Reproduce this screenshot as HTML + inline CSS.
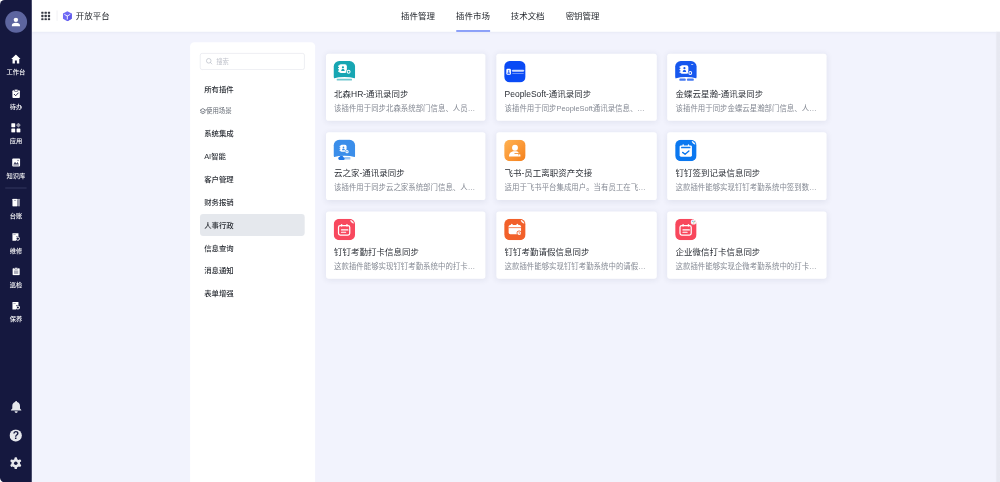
<!DOCTYPE html>
<html lang="zh-CN">
<head>
<meta charset="utf-8">
<title>开放平台 - 插件市场</title>
<style>
*{box-sizing:border-box;margin:0;padding:0}
html,body{width:1000px;height:482px;overflow:hidden;background:#f2f3fd}
body{font-family:"Liberation Sans","Noto Sans CJK SC",sans-serif;color:#1f2329}
#stage{position:absolute;left:0;top:0;width:1920px;height:926px;transform:scale(0.5208333);transform-origin:0 0;background:#f2f3fd;overflow:hidden;filter:blur(0.5px)}
.abs{position:absolute}
/* sidebar */
#sidebg{position:absolute;left:0;top:0;width:30px;height:926px;background:#fff}
#side{position:absolute;left:0;top:0;width:60.5px;height:925.5px;background:#15183f;border-radius:9px 0 0 9px}
#avatar{position:absolute;left:9.5px;top:20.8px;width:42px;height:42px;border-radius:50%;background:#5d659f}
.sico{position:absolute}
.sico svg{display:block;width:100%;height:100%}
.sico .q{position:absolute;left:0;top:0;width:100%;height:100%;text-align:center;font-size:20px;line-height:25.5px;font-weight:700;color:#15183f}
.slab{position:absolute;left:0;width:61px;text-align:center;color:#fff;font-size:12px;font-weight:500;line-height:16px;height:16px;white-space:nowrap}
#sdiv{position:absolute;left:10px;width:41px;top:360px;height:1.5px;background:#33365e}
/* header */
#head{position:absolute;left:60.5px;top:0;width:1860px;height:61px;background:#fff;box-shadow:0 2px 5px rgba(60,70,120,.05)}
#title{position:absolute;left:85px;top:18.5px;font-size:16.3px;line-height:24px;color:#1f2329}
.tab{position:absolute;top:18.5px;font-size:16.3px;line-height:24px;color:#1f2329;width:64px;white-space:nowrap}
#tabline{position:absolute;left:816px;top:57.6px;width:65px;height:3.4px;background:#6f88f7}
/* category panel */
#panel{position:absolute;left:365px;top:80.5px;width:240px;height:860px;background:#fff;border-radius:8px}
#search{position:absolute;left:19px;top:21.5px;width:201px;height:32px;border:1px solid #dfe1e8;border-radius:4px}
#search span{position:absolute;left:30px;top:8px;font-size:12.2px;line-height:16px;color:#c0c3cc}
.cat{position:absolute;left:19px;width:201px;height:42px;border-radius:6px;padding-left:8px;font-size:14.2px;line-height:42.6px;color:#2b2f36;font-weight:500}
.cat.on{background:#e5e8ed}
#scene{position:absolute;left:30.6px;top:122.4px;font-size:12.3px;line-height:20px;color:#646a73}
/* cards */
.card{position:absolute;width:306px;height:129px;background:#fff;border-radius:5px;box-shadow:0 2px 12px rgba(40,45,80,.085)}
.card .ic{position:absolute;display:block;overflow:hidden}
.card .t{position:absolute;left:15.2px;top:64.7px;width:280px;font-size:16.3px;line-height:24px;color:#2b2f36;white-space:nowrap;overflow:hidden}
.card .d{position:absolute;left:15.6px;top:94px;width:274px;font-size:14.25px;line-height:22px;color:#858a94;white-space:nowrap;overflow:hidden;text-overflow:ellipsis}
</style>
</head>
<body>
<div id="stage">

<div id="head">
  <svg class="abs" style="left:18.8px;top:21.5px" width="17.4" height="17.4" viewBox="0 0 20 20" fill="#353842"><rect x="0" y="0" width="5.2" height="5.2" rx="1.3"/><rect x="7.4" y="0" width="5.2" height="5.2" rx="1.3"/><rect x="14.8" y="0" width="5.2" height="5.2" rx="1.3"/><rect x="0" y="7.4" width="5.2" height="5.2" rx="1.3"/><rect x="7.4" y="7.4" width="5.2" height="5.2" rx="1.3"/><rect x="14.8" y="7.4" width="5.2" height="5.2" rx="1.3"/><rect x="0" y="14.8" width="5.2" height="5.2" rx="1.3"/><rect x="7.4" y="14.8" width="5.2" height="5.2" rx="1.3"/><rect x="14.8" y="14.8" width="5.2" height="5.2" rx="1.3"/></svg>
  <div class="abs" style="left:48px;top:20px;width:1px;height:20px;background:#e3e5ea"></div>
  <svg class="abs" style="left:59.5px;top:20.5px" width="18.6" height="20.3" viewBox="0 0 22 24">
    <path d="M11 0.5 L21 6 V18 L11 23.5 L1 18 V6 Z" fill="#6e69f5"/>
    <path d="M11 12 L21 6 V18 L11 23.5 Z" fill="#605aea"/>
    <path d="M5 8.2 L11 11.6 L17 8.2 M11 11.6 V18.5" stroke="#fff" stroke-width="2" fill="none" stroke-linecap="round"/>
  </svg>
  <div id="title">开放平台</div>
  <div class="tab" style="left:709.5px">插件管理</div>
  <div class="tab" style="left:815px">插件市场</div>
  <div class="tab" style="left:920px">技术文档</div>
  <div class="tab" style="left:1025.5px">密钥管理</div>
  <div id="tabline" style="left:815px"></div>
</div>

<div id="sidebg"></div>
<div id="side">
  <div id="avatar">
    <svg class="abs" style="left:12.5px;top:12px" width="17" height="18.7" viewBox="0 0 20 22" fill="#fff"><circle cx="10" cy="6" r="5"/><path d="M0.5 20 C0.5 15 4 12.5 10 12.5 S19.5 15 19.5 20 V21 H0.5 Z"/></svg>
  </div>
<!--SB-->
<div class="sico" style="left:21.0px;top:104.0px;width:19px;height:19px"><svg viewBox="0 0 20 20" fill="#fff"><path d="M10 0.8 L0.6 9.6 H3.2 V18.8 H8 V12.6 H12 V18.8 H16.8 V9.6 H19.4 Z"/></svg></div><div class="slab" style="top:131.2px">工作台</div>
<div class="sico" style="left:21.5px;top:170.5px;width:18px;height:18px"><svg viewBox="0 0 20 20"><rect x="2" y="2.6" width="16" height="16.6" rx="2.2" fill="#fff"/><rect x="6.4" y="0.6" width="7.2" height="4.4" rx="1.2" fill="#fff" stroke="#15183f" stroke-width="1.2"/><path d="M6 11.2 L9 14.2 L14.4 8.4" stroke="#15183f" stroke-width="2" fill="none" stroke-linecap="round" stroke-linejoin="round"/></svg></div><div class="slab" style="top:197.2px">待办</div>
<div class="sico" style="left:21.0px;top:236.0px;width:19px;height:19px"><svg viewBox="0 0 20 20" fill="#fff"><rect x="0.8" y="0.8" width="7.8" height="7.8" rx="1"/><rect x="0.8" y="11.4" width="7.8" height="7.8" rx="1"/><rect x="11.4" y="11.4" width="7.8" height="7.8" rx="1"/><rect x="11.6" y="1" width="7" height="7" rx="1" transform="rotate(45 15.1 4.5)" opacity=".55"/></svg></div><div class="slab" style="top:263.2px">应用</div>
<div class="sico" style="left:21.5px;top:302.5px;width:18px;height:18px"><svg viewBox="0 0 20 20"><rect x="1.6" y="1.6" width="16.8" height="16.8" rx="2" fill="#fff"/><path d="M4 14.5 L7.5 8.5 L10.5 12 L13 9 L16 14.5 Z" fill="#15183f" opacity=".8"/><rect x="4" y="15.2" width="12" height="1.4" fill="#15183f" opacity=".5"/><circle cx="14" cy="5.6" r="1.5" fill="#15183f" opacity=".6"/></svg></div><div class="slab" style="top:329.2px">知识库</div>
<div id="sdiv"></div>
<div class="sico" style="left:22.5px;top:381.0px;width:16px;height:16px"><svg viewBox="0 0 18 18"><rect x="1" y="0.8" width="11" height="16.4" rx="1.2" fill="#fff"/><rect x="13.2" y="0.8" width="3.8" height="16.4" rx="1" fill="#fff" opacity=".6"/><rect x="4.4" y="3.4" width="4.4" height="1.4" fill="#15183f" opacity=".5"/></svg></div><div class="slab" style="top:406.5px">台账</div>
<div class="sico" style="left:22.5px;top:447.0px;width:16px;height:16px"><svg viewBox="0 0 18 18"><path d="M1 1 H14 V8 H9 V17 H1 Z" fill="#fff"/><rect x="3" y="3.4" width="5" height="1.4" fill="#15183f" opacity=".5"/><circle cx="12.6" cy="12.6" r="3.6" fill="none" stroke="#fff" stroke-width="2"/><path d="M9.4 9.4 L11 11" stroke="#fff" stroke-width="2"/></svg></div><div class="slab" style="top:472.5px">维修</div>
<div class="sico" style="left:22.5px;top:513.0px;width:16px;height:16px"><svg viewBox="0 0 18 18"><rect x="1.4" y="2.4" width="15.2" height="15" rx="1.4" fill="#fff"/><rect x="5.6" y="0.6" width="6.8" height="3.6" rx="1" fill="#fff" stroke="#15183f" stroke-width="1"/><rect x="4.4" y="7" width="9.2" height="7.6" fill="#15183f" opacity=".35"/></svg></div><div class="slab" style="top:538.5px">巡检</div>
<div class="sico" style="left:22.5px;top:579.0px;width:16px;height:16px"><svg viewBox="0 0 18 18"><path d="M1 1 H14 V8 H9 V17 H1 Z" fill="#fff"/><rect x="3" y="3.4" width="5" height="1.4" fill="#15183f" opacity=".5"/><circle cx="12.8" cy="12.8" r="3.4" fill="none" stroke="#fff" stroke-width="2.2"/></svg></div><div class="slab" style="top:604.5px">保养</div>
<div class="sico" style="left:19.5px;top:768.5px;width:22px;height:24px"><svg viewBox="0 0 22 24" fill="#e6e7ec"><path d="M11 1 C12 1 12.8 1.8 12.8 2.8 C16.4 3.8 18.4 6.8 18.4 10.4 V15.4 L21 18.4 V19.4 H1 V18.4 L3.6 15.4 V10.4 C3.6 6.8 5.6 3.8 9.2 2.8 C9.2 1.8 10 1 11 1 Z"/><path d="M8 20.8 H14 A3 3 0 0 1 8 20.8 Z"/></svg></div>
<div class="sico" style="left:18.3px;top:823.5px;width:24.4px;height:24.4px"><svg viewBox="0 0 24 24"><circle cx="12" cy="12" r="11.6" fill="#e6e7ec"/></svg><span class="q">?</span></div>
<div class="sico" style="left:18.2px;top:877.4px;width:24.6px;height:24.6px"><svg viewBox="0 0 24 24"><g fill="#e6e7ec"><circle cx="12" cy="12" r="8"/><rect x="9.6" y="1" width="4.8" height="6" rx="1.6" transform="rotate(0 12 12)"/><rect x="9.6" y="1" width="4.8" height="6" rx="1.6" transform="rotate(60 12 12)"/><rect x="9.6" y="1" width="4.8" height="6" rx="1.6" transform="rotate(120 12 12)"/><rect x="9.6" y="1" width="4.8" height="6" rx="1.6" transform="rotate(180 12 12)"/><rect x="9.6" y="1" width="4.8" height="6" rx="1.6" transform="rotate(240 12 12)"/><rect x="9.6" y="1" width="4.8" height="6" rx="1.6" transform="rotate(300 12 12)"/></g><circle cx="12" cy="12" r="3.3" fill="#15183f"/></svg></div>
<!--/SB-->
</div>

<div id="panel">
  <div id="search"><svg class="abs" style="left:10px;top:7.5px" width="13.5" height="13.5" viewBox="0 0 14 14" fill="none" stroke="#b4b8c3" stroke-width="1.3"><circle cx="6" cy="6" r="4.6"/><path d="M9.4 9.4 L12.6 12.6" stroke-linecap="round"/></svg><span>搜索</span></div>
  <div class="cat" style="top:69px">所有插件</div>
  <svg class="abs" style="left:18.2px;top:126px" width="13" height="13" viewBox="0 0 10 10" fill="none" stroke="#5f656f" stroke-width="1.15"><path d="M5 1 L9 3.6 L5 6.2 L1 3.6 Z"/><path d="M1 6.2 L5 8.8 L9 6.2"/></svg>
  <div id="scene">使用场景</div>
  <div class="cat" style="top:154px">系统集成</div>
  <div class="cat" style="top:198px">AI智能</div>
  <div class="cat" style="top:242px">客户管理</div>
  <div class="cat" style="top:286px">财务报销</div>
  <div class="cat on" style="top:330px">人事行政</div>
  <div class="cat" style="top:374px">信息查询</div>
  <div class="cat" style="top:418px">消息通知</div>
  <div class="cat" style="top:462px">表单增强</div>
</div>

<div class="abs" style="left:1911.5px;top:61px;width:9px;height:866px;background:linear-gradient(90deg,#edeef7,#e7e8f1 30%)"></div>
<div id="cards">
<div class="card" style="left:626px;top:103px;width:306px;height:129px"><svg class="ic" style="left:13px;top:13px" width="44" height="44" viewBox="0 0 44 44"><clipPath id="cp0"><rect width="40" height="40" rx="10.4"/></clipPath><g transform="translate(1.71 1.12) scale(1.027)" clip-path="url(#cp0)"><rect width="40" height="40" fill="#fff"/><path d="M-1 -1 H41 V32.8 Q20 27.2 -1 32.8 Z" fill="#17a6b3"/>
<rect x="5.6" y="33.2" width="28.6" height="3.4" rx="1.2" fill="#17a6b3" opacity=".62"/>
<g transform="translate(8.0 6.2) scale(1.0)">
<rect x="0" y="2.2" width="3.4" height="2.4" rx="1" fill="#fff"/><rect x="0" y="6.9" width="3.4" height="2.4" rx="1" fill="#fff"/><rect x="0" y="11.6" width="3.4" height="2.4" rx="1" fill="#fff"/>
<rect x="1.8" y="0" width="14.8" height="16.2" rx="3.6" fill="#fff"/>
<circle cx="9.3" cy="5.6" r="2" fill="#17a6b3"/><path d="M6 12.6 C6 10 7.4 8.8 9.3 8.8 S12.6 10 12.6 12.6 Z" fill="#17a6b3"/>
</g>
<circle cx="27.9" cy="20.1" r="4.6" fill="#17a6b3"/><circle cx="27.9" cy="20.1" r="3.5999999999999996" fill="#fff"/><circle cx="27.9" cy="20.1" r="1.6999999999999997" fill="#17a6b3"/>
</g></svg><div class="t" style="left:15.40px">北森HR-通讯录同步</div><div class="d" style="left:15.40px">该插件用于同步北森系统部门信息、人员信息至平台通讯录</div></div>
<div class="card" style="left:953px;top:103px;width:308px;height:129px"><svg class="ic" style="left:14px;top:13px" width="44" height="44" viewBox="0 0 44 44"><clipPath id="cp1"><rect width="40" height="40" rx="10.4"/></clipPath><g transform="translate(1.06 1.12) scale(1.027)" clip-path="url(#cp1)"><rect width="40" height="40" fill="#0a4af5"/>
<rect x="4" y="14.5" width="8.6" height="11.2" rx="2.2" fill="#fff"/><circle cx="8.3" cy="18.6" r="1.5" fill="#0a4af5"/><path d="M5.9 24 C5.9 21.8 7 21 8.3 21 S10.7 21.8 10.7 24 Z" fill="#0a4af5"/>
<rect x="14.8" y="16.5" width="22" height="3.6" rx=".8" fill="#fff" opacity=".8"/><rect x="14.8" y="22.6" width="22" height="1.8" rx=".8" fill="#fff" opacity=".4"/>
</g></svg><div class="t" style="left:15.75px">PeopleSoft-通讯录同步</div><div class="d" style="left:15.75px">该插件用于同步PeopleSoft通讯录信息、部门信息至平台</div></div>
<div class="card" style="left:1281px;top:103px;width:306px;height:129px"><svg class="ic" style="left:14px;top:13px" width="44" height="44" viewBox="0 0 44 44"><clipPath id="cp2"><rect width="40" height="40" rx="10.4"/></clipPath><g transform="translate(1.36 1.12) scale(1.027)" clip-path="url(#cp2)"><rect width="40" height="40" fill="#fff"/><path d="M-1 -1 H41 V32.8 Q20 27.2 -1 32.8 Z" fill="#1657ee"/>
<rect x="8" y="32.8" width="11.6" height="4.2" rx="1.2" fill="#1657ee" opacity=".8"/><rect x="22.2" y="32.8" width="12.4" height="4.2" rx="1.2" fill="#1657ee" opacity=".8"/><rect x="29.6" y="6" width="4.4" height="1.7" rx=".8" fill="#fff" opacity=".85"/>
<g transform="translate(8.0 7.8) scale(1.0)">
<rect x="0" y="2.2" width="3.4" height="2.4" rx="1" fill="#fff"/><rect x="0" y="6.9" width="3.4" height="2.4" rx="1" fill="#fff"/><rect x="0" y="11.6" width="3.4" height="2.4" rx="1" fill="#fff"/>
<rect x="1.8" y="0" width="14.8" height="16.2" rx="3.6" fill="#fff"/>
<circle cx="9.3" cy="5.6" r="2" fill="#1657ee"/><path d="M6 12.6 C6 10 7.4 8.8 9.3 8.8 S12.6 10 12.6 12.6 Z" fill="#1657ee"/>
</g>
<circle cx="28.2" cy="22.4" r="4.6" fill="#1657ee"/><circle cx="28.2" cy="22.4" r="3.5999999999999996" fill="#fff"/><circle cx="28.2" cy="22.4" r="1.6999999999999997" fill="#1657ee"/>
</g></svg><div class="t" style="left:16.05px">金蝶云星瀚-通讯录同步</div><div class="d" style="left:16.05px">该插件用于同步金蝶云星瀚部门信息、人员信息至平台通讯录</div></div>
<div class="card" style="left:626px;top:254px;width:306px;height:130px"><svg class="ic" style="left:13px;top:13px" width="44" height="44" viewBox="0 0 44 44"><clipPath id="cp3"><rect width="40" height="40" rx="10.4"/></clipPath><g transform="translate(1.71 1.36) scale(1.027)" clip-path="url(#cp3)"><rect width="40" height="40" fill="#fff"/><path d="M-1 -1 H41 V32.8 Q20 27.2 -1 32.8 Z" fill="#3b8eea"/>
<path d="M10.6 37.6 a2.9 2.9 0 0 1 .5-5.7 a3.9 3.9 0 0 1 7.3 .7 a2.5 2.5 0 0 1 -.5 5 Z" fill="#2179e8"/><rect x="19.8" y="32.4" width="11.4" height="4.6" rx="1.2" fill="#3b8eea" opacity=".5"/>
<g transform="translate(10.8 9.5) scale(0.8)">
<rect x="0" y="2.2" width="3.4" height="2.4" rx="1" fill="#fff"/><rect x="0" y="6.9" width="3.4" height="2.4" rx="1" fill="#fff"/><rect x="0" y="11.6" width="3.4" height="2.4" rx="1" fill="#fff"/>
<rect x="1.8" y="0" width="14.8" height="16.2" rx="3.6" fill="#fff"/>
<circle cx="9.3" cy="5.6" r="2" fill="#3b8eea"/><path d="M6 12.6 C6 10 7.4 8.8 9.3 8.8 S12.6 10 12.6 12.6 Z" fill="#3b8eea"/>
</g>
<circle cx="24.9" cy="22.3" r="4.0" fill="#3b8eea"/><circle cx="24.9" cy="22.3" r="3.0" fill="#fff"/><circle cx="24.9" cy="22.3" r="1.1" fill="#3b8eea"/>
</g></svg><div class="t" style="left:15.40px">云之家-通讯录同步</div><div class="d" style="left:15.40px">该插件用于同步云之家系统部门信息、人员信息至平台通讯录</div></div>
<div class="card" style="left:953px;top:254px;width:308px;height:130px"><svg class="ic" style="left:14px;top:13px" width="44" height="44" viewBox="0 0 44 44"><clipPath id="cp4"><rect width="40" height="40" rx="10.4"/></clipPath><g transform="translate(1.06 1.36) scale(1.027)" clip-path="url(#cp4)"><defs><linearGradient id="gfs4" x1="0" y1="0" x2="1" y2="1"><stop offset="0" stop-color="#ffb252"/><stop offset=".5" stop-color="#fb9a38"/><stop offset="1" stop-color="#f4801c"/></linearGradient></defs>
<rect width="40" height="40" fill="url(#gfs4)"/>
<circle cx="20.2" cy="14.9" r="5.5" fill="#fff"/><path d="M8.9 31.5 C8.9 24.6 13 21.6 20 21.6 S30.4 24.6 30.4 31.5 Z" fill="#fff"/>
<path d="M20 25.6 H29 M26.6 23 L29.6 25.6 L26.6 28.2" stroke="#f4912f" stroke-width="1.7" fill="none" stroke-linecap="round" stroke-linejoin="round"/>
</g></svg><div class="t" style="left:15.75px">飞书-员工离职资产交接</div><div class="d" style="left:15.75px">适用于飞书平台集成用户。当有员工在飞书中离职时自动触发资产交接</div></div>
<div class="card" style="left:1281px;top:254px;width:306px;height:130px"><svg class="ic" style="left:14px;top:13px" width="44" height="44" viewBox="0 0 44 44"><clipPath id="cp5"><rect width="40" height="40" rx="10.4"/></clipPath><g transform="translate(1.36 1.36) scale(1.027)" clip-path="url(#cp5)"><rect width="40" height="40" fill="#0b78f0"/>
<ellipse cx="34.3" cy="5.7" rx="4.4" ry="1.5" transform="rotate(42 34.3 5.7)" fill="#fff" opacity=".9"/>
<rect x="8.3" y="10.6" width="23" height="21" rx="2.6" fill="#fff"/>
<rect x="13.6" y="8.6" width="2.6" height="4.6" rx="1.3" fill="#fff"/><rect x="23.6" y="8.6" width="2.6" height="4.6" rx="1.3" fill="#fff"/>
<rect x="11" y="13.2" width="17.6" height="2.8" rx=".6" fill="#0b78f0"/>
<path d="M13.9 23.6 L18.5 27.2 L25.6 20.8" stroke="#0b78f0" stroke-width="2.5" fill="none" stroke-linecap="round" stroke-linejoin="round"/>
</g></svg><div class="t" style="left:16.05px">钉钉签到记录信息同步</div><div class="d" style="left:16.05px">这款插件能够实现钉钉考勤系统中签到数据的自动同步</div></div>
<div class="card" style="left:626px;top:406px;width:306px;height:129px"><svg class="ic" style="left:13px;top:13px" width="44" height="44" viewBox="0 0 44 44"><clipPath id="cp6"><rect width="40" height="40" rx="10.4"/></clipPath><g transform="translate(1.71 1.06) scale(1.027)" clip-path="url(#cp6)"><rect width="40" height="40" fill="#f8485e"/>
<ellipse cx="34.3" cy="5.7" rx="4.4" ry="1.5" transform="rotate(42 34.3 5.7)" fill="#fff" opacity=".9"/>
<rect x="9" y="12.6" width="21" height="17.8" rx="3.2" fill="none" stroke="#fff" stroke-width="2.3"/>
<rect x="13.6" y="9.6" width="2.4" height="5" rx="1.2" fill="#fff"/><rect x="23.6" y="9.6" width="2.4" height="5" rx="1.2" fill="#fff"/>
<rect x="13.4" y="19.8" width="14.2" height="2.1" rx="1" fill="#fff"/><rect x="13.4" y="24.2" width="10" height="2.1" rx="1" fill="#fff"/>
</g></svg><div class="t" style="left:15.40px">钉钉考勤打卡信息同步</div><div class="d" style="left:15.40px">这款插件能够实现钉钉考勤系统中的打卡数据自动同步</div></div>
<div class="card" style="left:953px;top:406px;width:308px;height:129px"><svg class="ic" style="left:14px;top:13px" width="44" height="44" viewBox="0 0 44 44"><clipPath id="cp7"><rect width="40" height="40" rx="10.4"/></clipPath><g transform="translate(1.06 1.06) scale(1.027)" clip-path="url(#cp7)"><rect width="40" height="40" fill="#f2602a"/>
<ellipse cx="34.3" cy="5.7" rx="4.4" ry="1.5" transform="rotate(42 34.3 5.7)" fill="#fff" opacity=".9"/>
<rect x="8.3" y="11.6" width="23.2" height="17.2" rx="3" fill="#fff"/>
<rect x="13" y="9.2" width="2.5" height="5" rx="1.2" fill="#fff"/><rect x="23.4" y="9.2" width="2.5" height="5" rx="1.2" fill="#fff"/>
<rect x="8.3" y="16" width="23.2" height="1.4" fill="#f2602a"/>
<circle cx="28" cy="26.8" r="4.8" fill="#f2602a"/><circle cx="28" cy="26.8" r="3.5" fill="#fff"/><path d="M28 24.9 V27.1 H29.7" stroke="#f2602a" stroke-width="1.2" fill="none" stroke-linecap="round"/>
</g></svg><div class="t" style="left:15.75px">钉钉考勤请假信息同步</div><div class="d" style="left:15.75px">这款插件能够实现钉钉考勤系统中的请假数据自动同步</div></div>
<div class="card" style="left:1281px;top:406px;width:306px;height:129px"><svg class="ic" style="left:14px;top:13px" width="44" height="44" viewBox="0 0 44 44"><clipPath id="cp8"><rect width="40" height="40" rx="10.4"/></clipPath><g transform="translate(1.36 1.06) scale(1.027)" clip-path="url(#cp8)"><rect width="40" height="40" fill="#f8475c"/>
<circle cx="34.2" cy="5.8" r="5" fill="#f3f5fb"/><circle cx="33" cy="4.8" r="1.3" fill="#6aa0ee"/><circle cx="35.8" cy="5.2" r="1.1" fill="#7bd08a"/><circle cx="34.6" cy="7.6" r="1.1" fill="#f0b45a"/>
<rect x="9" y="12.6" width="21" height="17.8" rx="3.2" fill="none" stroke="#fff" stroke-width="2.3"/>
<rect x="13.6" y="9.6" width="2.4" height="5" rx="1.2" fill="#fff"/><rect x="23.6" y="9.6" width="2.4" height="5" rx="1.2" fill="#fff"/>
<rect x="13.4" y="19.8" width="14.2" height="2.1" rx="1" fill="#fff"/><rect x="13.4" y="24.2" width="10" height="2.1" rx="1" fill="#fff"/>
</g></svg><div class="t" style="left:16.05px">企业微信打卡信息同步</div><div class="d" style="left:16.05px">这款插件能够实现企微考勤系统中的打卡数据自动同步</div></div>
</div>

</div>
</body>
</html>
